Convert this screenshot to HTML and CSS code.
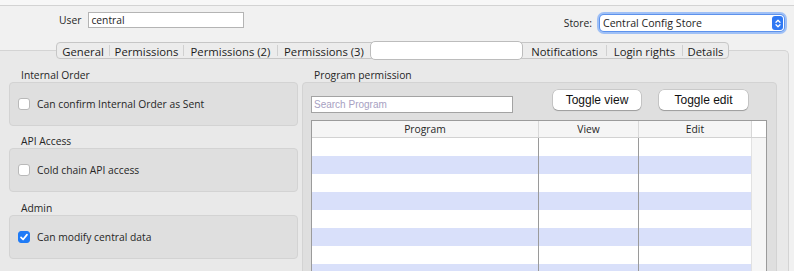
FILE: index.html
```html
<!DOCTYPE html>
<html lang="en">
<head>
    <meta charset="utf-8">
    <link rel="stylesheet" href="styles.css">
</head>
<body>
    <div class="strip"></div>

    <!-- User / store header -->
    <div class="header">
        <div class="field">
            <label for="user">User</label>
            <input type="text" id="user" class="text-input" value="central">
        </div>
        <div class="field">
            <label class="store-label">Store:</label>
            <div class="select">
                <span>Central Config Store</span>
                <span class="stepper">
                    <svg width="10" height="13" viewBox="0 0 10 13">
                        <path d="M3 5.2 L5 3.2 L7 5.2" fill="none" stroke="#fff" stroke-width="1.3" stroke-linecap="round" stroke-linejoin="round"/>
                        <path d="M3 7.8 L5 9.8 L7 7.8" fill="none" stroke="#fff" stroke-width="1.3" stroke-linecap="round" stroke-linejoin="round"/>
                    </svg>
                </span>
            </div>
        </div>
    </div>

    <!-- Tab pane -->
    <div class="pane">
        <div class="tabs">
            <span class="tab tab-general">General</span>
            <i class="sep"></i>
            <span class="tab tab-perm">Permissions</span>
            <i class="sep"></i>
            <span class="tab tab-perm2">Permissions (2)</span>
            <i class="sep"></i>
            <span class="tab tab-perm3">Permissions (3)</span>
            <span class="tab selected"></span>
            <span class="tab tab-notif">Notifications</span>
            <i class="sep"></i>
            <span class="tab tab-login">Login rights</span>
            <i class="sep"></i>
            <span class="tab tab-details">Details</span>
        </div>

        <div class="pane-body">
            <div class="left-col">
                <div class="group-title first">Internal Order</div>
                <div class="group-box">
                    <label class="check"><span class="box"></span>Can confirm Internal Order as Sent</label>
                </div>

                <div class="group-title">API Access</div>
                <div class="group-box">
                    <label class="check"><span class="box"></span>Cold chain API access</label>
                </div>

                <div class="group-title admin">Admin</div>
                <div class="group-box">
                    <label class="check">
                        <span class="box checked">
                            <svg width="12" height="12" viewBox="0 0 12 12">
                                <path d="M3 6.3 L5.1 8.5 L9 3.6" fill="none" stroke="#fff" stroke-width="1.7" stroke-linecap="round" stroke-linejoin="round"/>
                            </svg>
                        </span>Can modify central data
                    </label>
                </div>
            </div>

            <div class="right-col">
                <div class="group-title first">Program permission</div>
                <div class="group-box program-box">
                    <div class="toolbar">
                        <input type="text" class="search" placeholder="Search Program">
                        <button class="btn btn-view">Toggle view</button>
                        <button class="btn btn-edit">Toggle edit</button>
                    </div>

                    <div class="table">
                        <div class="thead">
                            <span class="th col-program">Program</span>
                            <span class="th col-view">View</span>
                            <span class="th col-edit">Edit</span>
                            <span class="th col-corner"></span>
                        </div>
                        <div class="tbody">
                            <div class="rows">
                                <div class="row"><span class="td col-program"></span><span class="td col-view"></span><span class="td col-edit"></span></div>
                                <div class="row"><span class="td col-program"></span><span class="td col-view"></span><span class="td col-edit"></span></div>
                                <div class="row"><span class="td col-program"></span><span class="td col-view"></span><span class="td col-edit"></span></div>
                                <div class="row"><span class="td col-program"></span><span class="td col-view"></span><span class="td col-edit"></span></div>
                                <div class="row"><span class="td col-program"></span><span class="td col-view"></span><span class="td col-edit"></span></div>
                                <div class="row"><span class="td col-program"></span><span class="td col-view"></span><span class="td col-edit"></span></div>
                                <div class="row"><span class="td col-program"></span><span class="td col-view"></span><span class="td col-edit"></span></div>
                                <div class="row"><span class="td col-program"></span><span class="td col-view"></span><span class="td col-edit"></span></div>
                            </div>
                            <div class="track"></div>
                        </div>
                    </div>
                </div>
            </div>
        </div>
    </div>
</body>
</html>
```

FILE: styles.css
```css
/* General Styles */
* {
    box-sizing: border-box;
}

html, body {
    margin: 0;
    padding: 0;
    height: 271px;
    overflow: hidden;
}

body {
    background-color: #f1f1f1;
    font-family: "Open Sans", "DejaVu Sans", sans-serif;
    font-size: 10.3px;
    color: #262626;
}

.strip {
    height: 6px;
    background-color: #f7f7f7;
    border-bottom: 1px solid #d3d3d3;
}

/* Header */
.header {
    height: 44px;
    display: flex;
    justify-content: space-between;
    align-items: flex-start;
    padding: 6px 7px 0 59px;
}

.field {
    display: flex;
    align-items: center;
}

.field label {
    margin-right: 7px;
}

.field .store-label {
    margin-right: 5px;
}

.text-input {
    width: 156px;
    height: 16px;
    padding: 0 2px;
    border: 1px solid #b4b4b4;
    background-color: #ffffff;
    font-family: "Open Sans", sans-serif;
    font-size: 10.3px;
    color: #1e1e1e;
    outline: none;
}

.select {
    width: 184px;
    height: 16px;
    margin: 3px;
    padding: 0 1px 0 3px;
    display: flex;
    justify-content: space-between;
    align-items: center;
    background-color: #ffffff;
    border-radius: 4px;
    box-shadow: 0 0 0 1px #5d92ec, 0 0 0 3px #9fc0f6;
    font-size: 10.6px;
    color: #1e1e1e;
}

.stepper {
    width: 11px;
    height: 14px;
    display: flex;
    align-items: center;
    justify-content: center;
    background-color: #2f78f3;
    border-radius: 3px;
}

/* Tabs */
.pane {
    width: 789px;
    height: 221px;
    background-color: #e9e9e9;
    border-top: 1px solid #d4d4d4;
    border-right: 1px solid #d4d4d4;
    border-top-right-radius: 5px;
}

.tabs {
    display: flex;
    align-items: center;
    width: fit-content;
    height: 17px;
    margin: -9px 0 0 56px;
    background-color: #ececec;
    border: 1px solid #c6c6c6;
    border-radius: 4px;
    font-size: 11.3px;
    color: #1c1c1c;
}

.tab {
    flex: none;
    text-align: center;
    line-height: 15px;
    padding-top: 1px;
}

.tab-general { width: 52px; }
.tab-perm { width: 73px; }
.tab-perm2 { width: 93px; }
.tab-perm3 { width: 92px; }
.tab-notif { width: 83px; }
.tab-login { width: 75px; }
.tab-details { width: 45px; }

.tab.selected {
    width: 153px;
    height: 19px;
    margin: 0 0 0 0;
    padding: 0;
    background-color: #ffffff;
    border: 1px solid #bcbcbc;
    border-radius: 5px;
}

.sep {
    flex: none;
    width: 1px;
    height: 11px;
    background-color: #d0d0d0;
}

/* Group boxes */
.pane-body {
    display: flex;
    gap: 4px;
    padding: 9px 0 0 9px;
}

.left-col {
    width: 289px;
}

.right-col {
    width: 475px;
}

.group-title {
    line-height: 14px;
    padding-left: 12px;
    margin-top: 8px;
}

.group-title.first {
    margin-top: 0;
}

.group-title.admin {
    margin-top: 9px;
}

.group-box {
    height: 44px;
    display: flex;
    align-items: center;
    padding-left: 8px;
    background-color: #dfdfdf;
    border: 1px solid #d3d3d3;
    border-radius: 4px;
}

.check {
    display: flex;
    align-items: center;
    gap: 7px;
}

.box {
    width: 12px;
    height: 12px;
    background-color: #ffffff;
    border: 1px solid #b9b9b9;
    border-radius: 3px;
    display: flex;
}

.box.checked {
    background-color: #1f7bf6;
    border-color: #1f7bf6;
    align-items: center;
    justify-content: center;
}

.box.checked svg {
    margin: -1px;
}

/* Program permission */
.program-box {
    height: 200px;
    display: block;
    padding: 7px 10px 0 8px;
}

.toolbar {
    display: flex;
    align-items: flex-start;
}

.search {
    width: 202px;
    height: 17px;
    margin-top: 6px;
    padding: 0 2px;
    border: 1px solid #a3a3a3;
    background-color: #ffffff;
    font-family: "Liberation Sans", Arial, sans-serif;
    font-size: 10px;
    outline: none;
}

.search::placeholder {
    color: #a7a1c2;
}

.btn {
    width: 88px;
    height: 20px;
    padding: 0 0 1px;
    background-color: #ffffff;
    border: none;
    border-radius: 5px;
    box-shadow: 0 0 0 0.5px rgba(0, 0, 0, 0.2), 0 1px 1px rgba(0, 0, 0, 0.22);
    font-family: "Liberation Sans", Arial, sans-serif;
    font-size: 12px;
    color: #111111;
}

.btn-view {
    margin-left: 40px;
}

.btn-edit {
    margin-left: 18px;
    width: 89px;
}

.table {
    width: 456px;
    margin-top: 7px;
    border: 1px solid #9b9b9b;
    border-bottom: none;
    background-color: #ffffff;
}

.thead {
    display: flex;
    height: 17px;
    background-color: #f5f5f5;
    border-bottom: 1px solid #d2d2d2;
}

.th {
    text-align: center;
    line-height: 16px;
    border-right: 1px solid #d8d8d8;
}

.col-program {
    width: 227px;
}

.col-view {
    width: 100px;
}

.col-edit {
    width: 113px;
}

.th.col-corner {
    width: 14px;
    background-color: #ffffff;
    border-right: none;
}

.tbody {
    display: flex;
}

.rows {
    width: 440px;
}

.row {
    display: flex;
    height: 18px;
}

.row:nth-child(even) {
    background-color: #d9e0fa;
}

.td.col-program,
.td.col-view {
    border-right: 1px solid #9a9a9a;
}

.td.col-edit {
    border-right: 1px solid #e2e2e2;
}

.track {
    width: 14px;
    background-color: #f6f6f6;
}
```
